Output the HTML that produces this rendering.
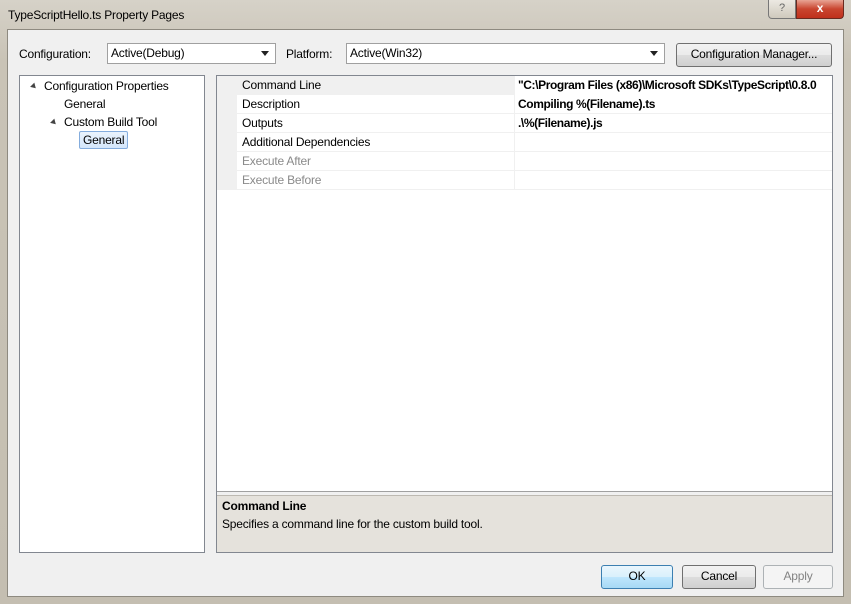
<!DOCTYPE html>
<html><head><meta charset="utf-8"><style>
*{box-sizing:border-box;margin:0;padding:0}
body{width:851px;height:604px;overflow:hidden;position:relative;font-family:"Liberation Sans",sans-serif;font-size:12px;letter-spacing:-0.2px;color:#000;background:linear-gradient(#d6d2c8,#c9c3b6 60px,#c4beb1);}
.a{position:absolute;white-space:nowrap}
.client{position:absolute;left:7px;top:29px;width:837px;height:568px;background:#f0f0f0;border:1px solid #8e8a80}
.combo{position:absolute;height:21px;background:#fff;border:1px solid #a0a0a0;padding:2px 3px;line-height:15px}
.combo:after{content:"";position:absolute;right:6px;top:7px;border-left:4px solid transparent;border-right:4px solid transparent;border-top:5px solid #222}
.btn{position:absolute;border:1px solid #707070;border-radius:3px;background:linear-gradient(#f2f2f2,#ebebeb 50%,#dddddd 51%,#cfcfcf);text-align:center;line-height:21px}
.row{position:absolute;left:237px;width:595px;height:19px;border-bottom:1px solid #f0f0f0;line-height:18px;white-space:nowrap}
.row .n{position:absolute;left:5px}
.row .v{position:absolute;left:277px;top:0;height:19px;border-left:1px solid #f0f0f0;padding-left:3px;font-weight:bold;width:318px;overflow:hidden;white-space:nowrap;letter-spacing:-0.4px}
.tri{display:inline-block;width:0;height:0;border-left:3px solid transparent;border-right:3px solid transparent;border-top:5px solid #444;transform:rotate(-45deg);margin-right:7px;vertical-align:1px}
</style></head><body>
<div class="a" style="left:8px;top:8px">TypeScriptHello.ts Property Pages</div>
<div class="a" style="left:768px;top:0;width:28px;height:19px;border:1px solid #777;border-top:none;border-radius:0 0 0 4px;background:linear-gradient(#ece9e2,#cfc9bd);text-align:center;font-size:11px;color:#666;line-height:17px">?</div>
<div class="a" style="left:796px;top:0;width:48px;height:19px;border:1px solid #6a2a20;border-top:none;border-radius:0 0 4px 0;background:linear-gradient(#e8a494,#c9452f 50%,#c0301c);text-align:center;color:#fff;font-weight:bold;line-height:17px">x</div>
<div class="client"></div>
<div class="a" style="left:19px;top:47px">Configuration:</div>
<div class="combo" style="left:107px;top:43px;width:169px">Active(Debug)</div>
<div class="a" style="left:286px;top:47px">Platform:</div>
<div class="combo" style="left:346px;top:43px;width:319px">Active(Win32)</div>
<div class="btn" style="left:676px;top:43px;width:156px;height:24px">Configuration Manager...</div>
<div class="a" style="left:19px;top:75px;width:186px;height:478px;background:#fff;border:1px solid #828790"></div>
<div class="a" style="left:31px;top:79px"><span class="tri"></span>Configuration Properties</div>
<div class="a" style="left:64px;top:97px">General</div>
<div class="a" style="left:51px;top:115px"><span class="tri"></span>Custom Build Tool</div>
<div class="a" style="left:79px;top:131px;height:18px;border:1px solid #84acdd;border-radius:2px;background:linear-gradient(#eaf3fd,#d4e6fb);padding:0 3px;line-height:16px">General</div>
<div class="a" style="left:216px;top:75px;width:617px;height:478px;border:1px solid #828790;background:#fff"></div>
<div class="a" style="left:217px;top:76px;width:20px;height:114px;background:#f0f0f0"></div>
<div class="row" style="top:76px;background:#f0f0f0"><span class="n">Command Line</span><span class="v" style="background:#fff">"C:\Program Files (x86)\Microsoft SDKs\TypeScript\0.8.0</span></div>
<div class="row" style="top:95px"><span class="n">Description</span><span class="v">Compiling %(Filename).ts</span></div>
<div class="row" style="top:114px"><span class="n">Outputs</span><span class="v">.\%(Filename).js</span></div>
<div class="row" style="top:133px"><span class="n">Additional Dependencies</span><span class="v"></span></div>
<div class="row" style="top:152px;color:#8a8a8a"><span class="n">Execute After</span><span class="v"></span></div>
<div class="row" style="top:171px;color:#8a8a8a"><span class="n">Execute Before</span><span class="v"></span></div>
<div class="a" style="left:217px;top:491px;width:615px;height:61px;background:#e5e2dc;border-top:1px solid #a0a0a0;box-shadow:inset 0 3px 0 #f0f0f0,inset 0 4px 0 #bdb9b1"></div>
<div class="a" style="left:222px;top:499px;font-weight:bold">Command Line</div>
<div class="a" style="left:222px;top:517px">Specifies a command line for the custom build tool.</div>
<div class="btn" style="left:601px;top:565px;width:72px;height:24px;border-color:#3c7fb1;background:linear-gradient(#eaf6fd,#d9f0fc 50%,#bee6fd 51%,#a7d9f5)">OK</div>
<div class="btn" style="left:682px;top:565px;width:74px;height:24px">Cancel</div>
<div class="btn" style="left:763px;top:565px;width:70px;height:24px;border-color:#adb2b5;background:#f4f4f4;color:#838383">Apply</div>
</body></html>
